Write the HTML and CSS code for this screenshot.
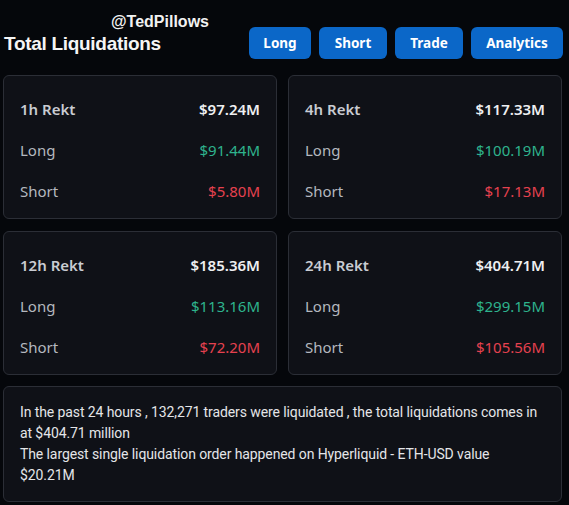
FILE: index.html
```html
<!DOCTYPE html>
<html lang="en">
<head>
<meta charset="utf-8">
<link rel="stylesheet" href="styles.css">
</head>
<body>
<div class="page">
  <header class="header">
    <div class="titles">
      <div class="handle">@TedPillows</div>
      <h1 class="title">Total Liquidations</h1>
    </div>
    <nav class="buttons">
      <span class="btn btn-long">Long</span>
      <span class="btn btn-short">Short</span>
      <span class="btn btn-trade">Trade</span>
      <span class="btn btn-analytics">Analytics</span>
    </nav>
  </header>
  <section class="grid">
    <div class="card">
      <div class="row"><span class="head">1h Rekt</span><span class="total">$97.24M</span></div>
      <div class="row"><span class="label">Long</span><span class="long">$91.44M</span></div>
      <div class="row"><span class="label">Short</span><span class="short">$5.80M</span></div>
    </div>
    <div class="card">
      <div class="row"><span class="head">4h Rekt</span><span class="total">$117.33M</span></div>
      <div class="row"><span class="label">Long</span><span class="long">$100.19M</span></div>
      <div class="row"><span class="label">Short</span><span class="short">$17.13M</span></div>
    </div>
    <div class="card">
      <div class="row"><span class="head">12h Rekt</span><span class="total">$185.36M</span></div>
      <div class="row"><span class="label">Long</span><span class="long">$113.16M</span></div>
      <div class="row"><span class="label">Short</span><span class="short">$72.20M</span></div>
    </div>
    <div class="card">
      <div class="row"><span class="head">24h Rekt</span><span class="total">$404.71M</span></div>
      <div class="row"><span class="label">Long</span><span class="long">$299.15M</span></div>
      <div class="row"><span class="label">Short</span><span class="short">$105.56M</span></div>
    </div>
  </section>
  <section class="summary">
    <p>In the past 24 hours , 132,271 traders were liquidated , the total liquidations comes in at $404.71 million</p>
    <p>The largest single liquidation order happened on Hyperliquid - ETH-USD value $20.21M</p>
  </section>
</div>
</body>
</html>
```
FILE: styles.css
```css
html, body {
  margin: 0;
  padding: 0;
  background: #05070b;
}
body {
  font-family: "Noto Sans", "DejaVu Sans", sans-serif;
  color: #e6e7ea;
}
.page {
  padding: 0 7px 0 3px;
}
.header {
  display: flex;
  justify-content: space-between;
  align-items: flex-start;
  height: 75px;
}
.titles {
  padding-left: 1px;
  padding-top: 12px;
}
.handle {
  padding-left: 107px;
  font-family: "Liberation Sans", sans-serif;
  font-weight: bold;
  font-size: 16px;
  line-height: 20px;
  color: #f2f2f2;
}
.title {
  margin: 0;
  font-family: "Liberation Sans", sans-serif;
  font-weight: bold;
  font-size: 19px;
  line-height: 23px;
  letter-spacing: -0.3px;
  color: #f5f5f5;
}
.buttons {
  display: flex;
  gap: 8px;
  padding-top: 27px;
  margin-right: -1px;
}
.btn {
  display: inline-flex;
  align-items: center;
  justify-content: center;
  height: 32px;
  padding: 0 15px;
  border-radius: 6px;
  background: #0b67c8;
  color: #ffffff;
  font-family: "Noto Sans", sans-serif;
  font-weight: 700;
  font-size: 13.5px;
}
.btn-long { width: 32px; }
.btn-short { width: 38px; }
.btn-trade { width: 38px; }
.btn-analytics { width: 62px; }
.grid {
  display: grid;
  grid-template-columns: 1fr 1fr;
  column-gap: 11px;
  row-gap: 12px;
}
.card {
  box-sizing: border-box;
  height: 144px;
  background: #0f1117;
  border: 1px solid #2b2e36;
  border-radius: 6px;
  padding: 22px 16px 0 16px;
  display: flex;
  flex-direction: column;
  gap: 19px;
}
.row {
  display: flex;
  justify-content: space-between;
  align-items: center;
  height: 22px;
  font-size: 15px;
}
.head {
  color: #c9ccd2;
  font-weight: 600;
}
.label {
  color: #b4b8bf;
}
.total {
  color: #eeeff1;
  font-weight: 600;
}
.long {
  color: #2eb38d;
}
.short {
  color: #e5414f;
}
.summary {
  box-sizing: border-box;
  margin-top: 11px;
  height: 116px;
  background: #0f1117;
  border: 1px solid #2b2e36;
  border-radius: 6px;
  padding: 15px 22px 0 16px;
  font-family: "Roboto", sans-serif;
  font-size: 14px;
  line-height: 21px;
  letter-spacing: -0.1px;
  color: #e4e5e8;
}
.summary p {
  margin: 0;
}
```
